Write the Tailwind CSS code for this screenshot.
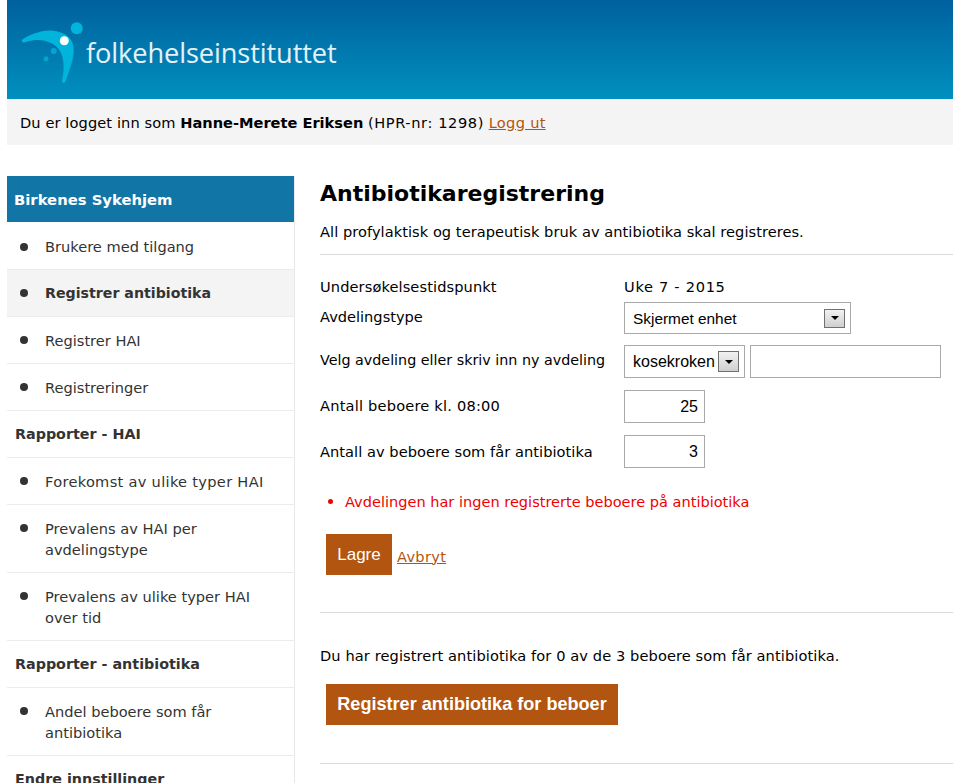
<!DOCTYPE html>
<html lang="no">
  <head>
    <meta charset="UTF-8" />
    <meta name="viewport" content="width=device-width, initial-scale=1.0" />
    <title>Antibiotikaregistrering</title>
    <script src="https://cdn.jsdelivr.net/npm/@tailwindcss/browser@4"></script>
  </head>
  <body class="bg-white h-[783px] overflow-hidden pl-[7px] text-[14.6px] leading-[21px] text-black font-['DejaVu_Sans',sans-serif]">
    <!-- Header -->
    <header class="h-[99px] bg-gradient-to-b from-[#00619e] to-[#0090bf] flex items-start">
      <svg class="ml-[14px] mt-[21px] shrink-0" width="62" height="64" viewBox="0 0 62 64">
        <path d="M1.3 18.5 C6 15 14 12 20 10.5 C27 9 33 9.5 38 11 C46 13 51.5 18 52.5 26 C53.5 33 51 42 48.5 49 C47 53 46 57 44.5 60.5 C43.5 62.5 41 62.5 41 59.5 C42 54 43 49 42.5 43 C42 33 38 26 31 22.5 C25 19.5 20 18.5 14 19 C10 19.5 6 20.5 3.5 21.5 C1 22 0.3 20 1.3 18.5 Z" fill="#00b4dc" />
        <circle cx="55.7" cy="7.3" r="6" fill="#00b4dc" />
        <circle cx="43.3" cy="19.7" r="4.5" fill="#ffffff" />
        <circle cx="32.7" cy="30" r="3" fill="#00a5d2" />
        <circle cx="25" cy="37.7" r="2.5" fill="#00a5d2" />
      </svg>
      <div class="ml-[3px] mt-[36px] text-[27.2px] leading-[34px] text-white/90 tracking-[-0.1px] font-['Open_Sans',sans-serif]">folkehelseinstituttet</div>
    </header>

    <!-- Login bar -->
    <div class="h-[46px] bg-[#f4f4f4] pl-[13px] flex items-center">
      <p><span class="tracking-[0.1px]">Du er logget inn som</span> <b class="text-[14.6px]">Hanne-Merete Eriksen</b> <span class="tracking-[0.6px]">(HPR-nr: 1298)</span> <a href="#" class="underline text-[#b25510] tracking-[0.3px]">Logg ut</a></p>
    </div>

    <div class="flex mt-[31px] items-start">
      <!-- Sidebar -->
      <nav class="w-[288px] shrink-0 border-r border-[#e8e8e8] text-[#333]">
        <div class="h-[46px] pt-[1px] bg-[#1175a6] text-white text-[14.8px] font-bold pl-[7px] flex items-center">Birkenes Sykehjem</div>
        <ul>
          <li class="h-[48px] pt-[2px] border-b border-[#ececec] flex items-center"><span class="w-[8px] h-[8px] rounded-full bg-[#333] ml-[13px] mr-[17px]"></span>Brukere med tilgang</li>
          <li class="h-[47px] border-b border-[#ececec] bg-[#f4f4f4] font-bold text-[14.2px] flex items-center"><span class="w-[8px] h-[8px] rounded-full bg-[#333] ml-[13px] mr-[17px]"></span>Registrer antibiotika</li>
          <li class="h-[47px] border-b border-[#ececec] flex items-center"><span class="w-[8px] h-[8px] rounded-full bg-[#333] ml-[13px] mr-[17px]"></span>Registrer HAI</li>
          <li class="h-[47px] border-b border-[#ececec] flex items-center"><span class="w-[8px] h-[8px] rounded-full bg-[#333] ml-[13px] mr-[17px]"></span>Registreringer</li>
          <li class="h-[47px] border-b border-[#ececec] font-bold text-[14.3px] pl-[8px] flex items-center">Rapporter - HAI</li>
          <li class="h-[47px] border-b border-[#ececec] flex items-center"><span class="w-[8px] h-[8px] rounded-full bg-[#333] ml-[13px] mr-[17px]"></span><span class="tracking-[0.3px]">Forekomst av ulike typer HAI</span></li>
          <li class="h-[68px] border-b border-[#ececec] flex items-start pt-[13px]"><span class="w-[8px] h-[8px] rounded-full bg-[#333] ml-[13px] mr-[17px] mt-[6px] shrink-0"></span><span>Prevalens av HAI per<br />avdelingstype</span></li>
          <li class="h-[68px] border-b border-[#ececec] flex items-start pt-[13px]"><span class="w-[8px] h-[8px] rounded-full bg-[#333] ml-[13px] mr-[17px] mt-[6px] shrink-0"></span><span>Prevalens av ulike typer HAI<br />over tid</span></li>
          <li class="h-[47px] border-b border-[#ececec] font-bold text-[14.3px] pl-[8px] flex items-center">Rapporter - antibiotika</li>
          <li class="h-[68px] border-b border-[#ececec] flex items-start pt-[13px]"><span class="w-[8px] h-[8px] rounded-full bg-[#333] ml-[13px] mr-[17px] mt-[6px] shrink-0"></span><span>Andel beboere som får<br />antibiotika</span></li>
          <li class="h-[47px] font-bold text-[14.3px] pl-[8px] flex items-center">Endre innstillinger</li>
        </ul>
      </nav>

      <!-- Main -->
      <main class="ml-[25px] flex-1 min-w-0">
        <h1 class="text-[22px] leading-[34px] font-bold mt-[1px]">Antibiotikaregistrering</h1>
        <p class="mt-[10px] tracking-[0.05px]">All profylaktisk og terapeutisk bruk av antibiotika skal registreres.</p>
        <hr class="mt-[12px] border-[#d9d9d9]" />

        <div class="mt-[21px] flex h-[21px]">
          <span class="w-[304px] tracking-[0.1px]">Undersøkelsestidspunkt</span><span class="tracking-[0.7px]">Uke 7 - 2015</span>
        </div>
        <div class="flex mt-[5px] items-start">
          <span class="w-[304px] mt-[4px]">Avdelingstype</span>
          <div class="w-[227px] h-[32px] border border-[#a9a9a9] flex items-center justify-between pl-[8px] pr-[5px] font-['Liberation_Sans',sans-serif] text-[15.4px]">
            Skjermet enhet
            <span class="w-[21px] h-[19px] border border-[#707070] bg-gradient-to-b from-[#f2f2f2] to-[#cfcfcf] flex items-center justify-center"><span class="border-x-[4px] border-t-[4px] border-x-transparent border-t-black"></span></span>
          </div>
        </div>
        <div class="flex mt-[11px] items-start">
          <span class="w-[304px] mt-[5px] text-[14.3px]">Velg avdeling eller skriv inn ny avdeling</span>
          <div class="w-[121px] h-[33px] border border-[#a9a9a9] flex items-center justify-between pl-[8px] pr-[5px] font-['Liberation_Sans',sans-serif] text-[16px]">
            kosekroken
            <span class="w-[21px] h-[21px] border border-[#707070] bg-gradient-to-b from-[#f2f2f2] to-[#cfcfcf] flex items-center justify-center"><span class="border-x-[4px] border-t-[4px] border-x-transparent border-t-black"></span></span>
          </div>
          <div class="ml-[5px] w-[191px] h-[33px] border border-[#a9a9a9]"></div>
        </div>
        <div class="flex mt-[12px] items-start">
          <span class="w-[304px] mt-[5px] tracking-[0.2px]">Antall beboere kl. 08:00</span>
          <div class="w-[81px] h-[33px] border border-[#a9a9a9] flex items-center justify-end pr-[6px] font-['Liberation_Sans',sans-serif] text-[16px]">25</div>
        </div>
        <div class="flex mt-[12px] items-start">
          <span class="w-[304px] mt-[6px] tracking-[0.05px]">Antall av beboere som får antibiotika</span>
          <div class="w-[81px] h-[33px] border border-[#a9a9a9] flex items-center justify-end pr-[6px] font-['Liberation_Sans',sans-serif] text-[16px]">3</div>
        </div>

        <div class="mt-[23px] flex items-center text-[#f00000]">
          <span class="w-[5px] h-[5px] rounded-full bg-[#f00000] ml-[8px] mr-[12px]"></span><span class="text-[14.55px]">Avdelingen har ingen registrerte beboere på antibiotika</span>
        </div>

        <div class="mt-[22px] ml-[6px] flex items-center h-[41px]">
          <button class="w-[66px] h-[41px] bg-[#b25510] text-white font-['Liberation_Sans',sans-serif] text-[17px]">Lagre</button>
          <a href="#" class="ml-[5px] mt-[3px] underline text-[#b25510] tracking-[0.3px]">Avbryt</a>
        </div>
        <hr class="mt-[37px] border-[#d9d9d9]" />

        <p class="mt-[32px] tracking-[0.1px]">Du har registrert antibiotika for 0 av de 3 beboere som får antibiotika.</p>
        <button class="mt-[18px] ml-[6px] block w-[292px] h-[41px] bg-[#b25510] text-white font-bold font-['Liberation_Sans',sans-serif] text-[18.1px]">Registrer antibiotika for beboer</button>
        <hr class="mt-[38px] border-[#d9d9d9]" />
      </main>
    </div>
  </body>
</html>
